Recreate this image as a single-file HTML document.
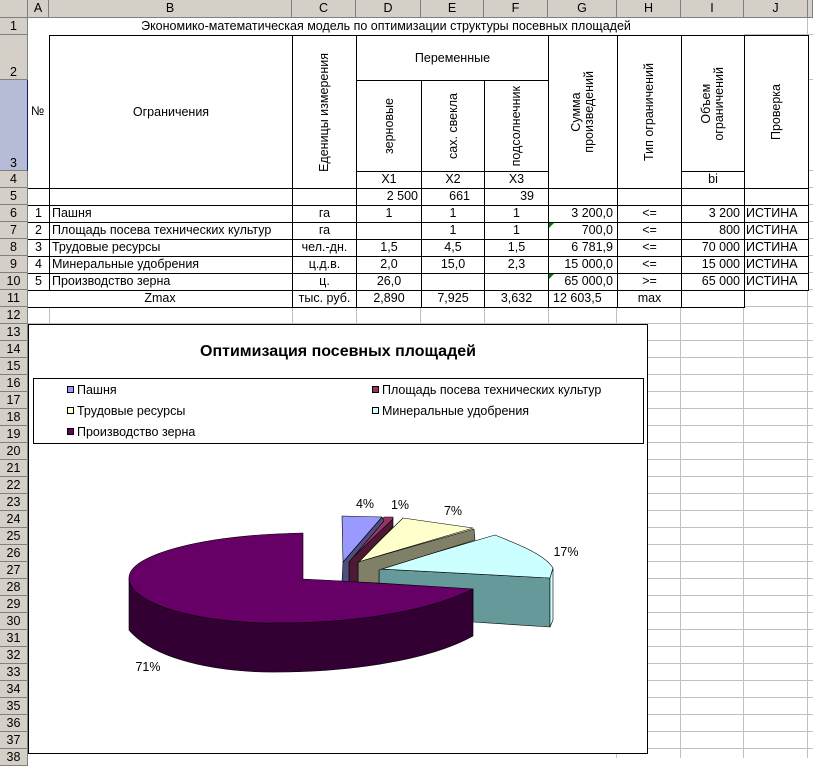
<!DOCTYPE html>
<html><head><meta charset="utf-8">
<style>
*{margin:0;padding:0;box-sizing:border-box}
body{width:813px;height:758px;overflow:hidden;background:#fff;font-family:"Liberation Sans",Arial,sans-serif;font-size:12.5px;color:#000;position:relative}
.a{position:absolute}
.ch{position:absolute;top:0;height:18px;background:#d4d0c8;border-right:1px solid #808080;border-bottom:1px solid #808080;text-align:center;line-height:17px;font-size:12.5px}
.rh{position:absolute;left:0;width:28px;background:#d4d0c8;border-right:1px solid #808080;border-bottom:1px solid #808080;text-align:center;font-size:12.5px}
.c{position:absolute;border:1px solid #000;background:#fff;line-height:15px;white-space:nowrap;overflow:hidden;padding:0 3px}
.v{position:absolute;border:1px solid #000;background:#fff;display:flex;align-items:center;justify-content:center}
.v span{writing-mode:vertical-rl;transform:rotate(180deg);text-align:center;line-height:13px;white-space:nowrap}
.r{text-align:right}.m{text-align:center}
.gl{position:absolute;background:#c0c0c0}
.sq{position:absolute;width:7px;height:7px;border:1px solid #000}
.lt{position:absolute;font-size:12.5px;line-height:14px;white-space:nowrap}
</style></head><body>
<div class="a" style="left:28px;top:18px;width:785px;height:740px;background:repeating-linear-gradient(to bottom,transparent 0 16px,#c0c0c0 16px 17px)"></div>
<div class="a" style="left:28px;top:18px;width:785px;height:289px;background:#fff"></div>
<div class="gl" style="left:49px;top:307px;width:1px;height:17px"></div>
<div class="gl" style="left:292px;top:307px;width:1px;height:17px"></div>
<div class="gl" style="left:356px;top:307px;width:1px;height:17px"></div>
<div class="gl" style="left:420px;top:307px;width:1px;height:17px"></div>
<div class="gl" style="left:484px;top:307px;width:1px;height:17px"></div>
<div class="gl" style="left:548px;top:307px;width:1px;height:17px"></div>
<div class="gl" style="left:616px;top:307px;width:1px;height:451px"></div>
<div class="gl" style="left:680px;top:307px;width:1px;height:451px"></div>
<div class="gl" style="left:743px;top:18px;width:1px;height:740px"></div>
<div class="gl" style="left:807px;top:18px;width:1px;height:740px"></div>
<div class="gl" style="left:28px;top:34px;width:785px;height:1px"></div>
<div class="gl" style="left:808px;top:79px;width:5px;height:1px"></div>
<div class="gl" style="left:808px;top:170px;width:5px;height:1px"></div>
<div class="gl" style="left:808px;top:187px;width:5px;height:1px"></div>
<div class="gl" style="left:808px;top:204px;width:5px;height:1px"></div>
<div class="gl" style="left:808px;top:221px;width:5px;height:1px"></div>
<div class="gl" style="left:808px;top:238px;width:5px;height:1px"></div>
<div class="gl" style="left:808px;top:255px;width:5px;height:1px"></div>
<div class="gl" style="left:808px;top:272px;width:5px;height:1px"></div>
<div class="gl" style="left:808px;top:289px;width:5px;height:1px"></div>
<div class="gl" style="left:744px;top:306px;width:69px;height:1px"></div>
<div class="gl" style="left:28px;top:306px;width:716px;height:1px"></div>

<div class="ch" style="left:0;width:28px"></div>
<div class="ch" style="left:28px;width:21px">A</div>
<div class="ch" style="left:49px;width:243px">B</div>
<div class="ch" style="left:292px;width:64px">C</div>
<div class="ch" style="left:356px;width:65px">D</div>
<div class="ch" style="left:421px;width:63px">E</div>
<div class="ch" style="left:484px;width:64px">F</div>
<div class="ch" style="left:548px;width:69px">G</div>
<div class="ch" style="left:617px;width:64px">H</div>
<div class="ch" style="left:681px;width:63px">I</div>
<div class="ch" style="left:744px;width:64px">J</div>
<div class="ch" style="left:808px;width:5px"></div>

<div class="rh" style="top:18px;height:17px;line-height:16px">1</div>
<div class="rh" style="top:35px;height:45px;line-height:14px;padding-top:30px">2</div>
<div class="rh" style="top:80px;height:91px;background:#b6bcd6;border-right:1px solid #0a246a;line-height:14px;padding-top:76px">3</div>
<div class="rh" style="top:171px;height:17px;line-height:16px">4</div>
<div class="rh" style="top:188px;height:17px;line-height:16px">5</div>
<div class="rh" style="top:205px;height:17px;line-height:16px">6</div>
<div class="rh" style="top:222px;height:17px;line-height:16px">7</div>
<div class="rh" style="top:239px;height:17px;line-height:16px">8</div>
<div class="rh" style="top:256px;height:17px;line-height:16px">9</div>
<div class="rh" style="top:273px;height:17px;line-height:16px">10</div>
<div class="rh" style="top:290px;height:17px;line-height:16px">11</div>
<div class="rh" style="top:307px;height:17px;line-height:16px">12</div>
<div class="rh" style="top:324px;height:17px;line-height:16px">13</div>
<div class="rh" style="top:341px;height:17px;line-height:16px">14</div>
<div class="rh" style="top:358px;height:17px;line-height:16px">15</div>
<div class="rh" style="top:375px;height:17px;line-height:16px">16</div>
<div class="rh" style="top:392px;height:17px;line-height:16px">17</div>
<div class="rh" style="top:409px;height:17px;line-height:16px">18</div>
<div class="rh" style="top:426px;height:17px;line-height:16px">19</div>
<div class="rh" style="top:443px;height:17px;line-height:16px">20</div>
<div class="rh" style="top:460px;height:17px;line-height:16px">21</div>
<div class="rh" style="top:477px;height:17px;line-height:16px">22</div>
<div class="rh" style="top:494px;height:17px;line-height:16px">23</div>
<div class="rh" style="top:511px;height:17px;line-height:16px">24</div>
<div class="rh" style="top:528px;height:17px;line-height:16px">25</div>
<div class="rh" style="top:545px;height:17px;line-height:16px">26</div>
<div class="rh" style="top:562px;height:17px;line-height:16px">27</div>
<div class="rh" style="top:579px;height:17px;line-height:16px">28</div>
<div class="rh" style="top:596px;height:17px;line-height:16px">29</div>
<div class="rh" style="top:613px;height:17px;line-height:16px">30</div>
<div class="rh" style="top:630px;height:17px;line-height:16px">31</div>
<div class="rh" style="top:647px;height:17px;line-height:16px">32</div>
<div class="rh" style="top:664px;height:17px;line-height:16px">33</div>
<div class="rh" style="top:681px;height:17px;line-height:16px">34</div>
<div class="rh" style="top:698px;height:17px;line-height:16px">35</div>
<div class="rh" style="top:715px;height:17px;line-height:16px">36</div>
<div class="rh" style="top:732px;height:17px;line-height:16px">37</div>
<div class="rh" style="top:749px;height:17px;line-height:16px">38</div>

<div class="a" style="left:28px;top:18px;width:716px;height:17px;text-align:center;line-height:17px;background:#fff">Экономико-математическая модель по оптимизации структуры посевных площадей</div>

<div class="v" style="left:28px;top:35px;width:22px;height:154px;border-left:none;border-top:none"></div>
<div class="a" style="left:31px;top:104px">№</div>
<div class="v" style="left:49px;top:35px;width:244px;height:154px"><div>Ограничения</div></div>
<div class="v" style="left:292px;top:35px;width:65px;height:154px"><span>Еденицы измерения</span></div>
<div class="v" style="left:356px;top:35px;width:193px;height:46px"><div>Переменные</div></div>
<div class="v" style="left:356px;top:80px;width:66px;height:92px"><span>зерновые</span></div>
<div class="v" style="left:421px;top:80px;width:64px;height:92px"><span>сах. свекла</span></div>
<div class="v" style="left:484px;top:80px;width:65px;height:92px"><span>подсолнечник</span></div>
<div class="c m" style="left:356px;top:171px;width:66px;height:18px">X1</div>
<div class="c m" style="left:421px;top:171px;width:64px;height:18px">X2</div>
<div class="c m" style="left:484px;top:171px;width:65px;height:18px">X3</div>
<div class="v" style="left:548px;top:35px;width:70px;height:154px"><span>Сумма<br>произведений</span></div>
<div class="v" style="left:617px;top:35px;width:65px;height:154px"><span>Тип ограничений</span></div>
<div class="v" style="left:681px;top:35px;width:64px;height:137px"><span>Объем<br>ограничений</span></div>
<div class="c m" style="left:681px;top:171px;width:64px;height:18px">bi</div>
<div class="v" style="left:744px;top:35px;width:65px;height:154px"><span>Проверка</span></div>

<div class="c" style="left:28px;top:188px;width:22px;height:18px;border-left:none"></div>
<div class="c" style="left:49px;top:188px;width:244px;height:18px"></div>
<div class="c" style="left:292px;top:188px;width:65px;height:18px"></div>
<div class="c r" style="left:356px;top:188px;width:66px;height:18px">2 500</div>
<div class="c r" style="left:421px;top:188px;width:64px;height:18px;padding-right:14px">661</div>
<div class="c r" style="left:484px;top:188px;width:65px;height:18px;padding-right:14px">39</div>
<div class="c" style="left:548px;top:188px;width:70px;height:18px"></div>
<div class="c" style="left:617px;top:188px;width:65px;height:18px"></div>
<div class="c" style="left:681px;top:188px;width:64px;height:18px"></div>
<div class="c" style="left:744px;top:188px;width:65px;height:18px"></div>

<div class="c m" style="left:28px;top:205px;width:22px;height:18px;border-left:none">1</div>
<div class="c" style="left:49px;top:205px;width:244px;height:18px;padding-left:2px">Пашня</div>
<div class="c m" style="left:292px;top:205px;width:65px;height:18px">га</div>
<div class="c m" style="left:356px;top:205px;width:66px;height:18px">1</div>
<div class="c m" style="left:421px;top:205px;width:64px;height:18px">1</div>
<div class="c m" style="left:484px;top:205px;width:65px;height:18px">1</div>
<div class="c r" style="left:548px;top:205px;width:70px;height:18px;padding-right:4px">3 200,0</div>
<div class="c m" style="left:617px;top:205px;width:65px;height:18px">&lt;=</div>
<div class="c r" style="left:681px;top:205px;width:64px;height:18px;padding-right:4px">3 200</div>
<div class="c" style="left:744px;top:205px;width:65px;height:18px;padding-left:1px">ИСТИНА</div>

<div class="c m" style="left:28px;top:222px;width:22px;height:18px;border-left:none">2</div>
<div class="c" style="left:49px;top:222px;width:244px;height:18px;padding-left:2px">Площадь посева технических культур</div>
<div class="c m" style="left:292px;top:222px;width:65px;height:18px">га</div>
<div class="c m" style="left:356px;top:222px;width:66px;height:18px"></div>
<div class="c m" style="left:421px;top:222px;width:64px;height:18px">1</div>
<div class="c m" style="left:484px;top:222px;width:65px;height:18px">1</div>
<div class="c r" style="left:548px;top:222px;width:70px;height:18px;padding-right:4px">700,0</div>
<div class="c m" style="left:617px;top:222px;width:65px;height:18px">&lt;=</div>
<div class="c r" style="left:681px;top:222px;width:64px;height:18px;padding-right:4px">800</div>
<div class="c" style="left:744px;top:222px;width:65px;height:18px;padding-left:1px">ИСТИНА</div>

<div class="c m" style="left:28px;top:239px;width:22px;height:18px;border-left:none">3</div>
<div class="c" style="left:49px;top:239px;width:244px;height:18px;padding-left:2px">Трудовые ресурсы</div>
<div class="c m" style="left:292px;top:239px;width:65px;height:18px">чел.-дн.</div>
<div class="c m" style="left:356px;top:239px;width:66px;height:18px">1,5</div>
<div class="c m" style="left:421px;top:239px;width:64px;height:18px">4,5</div>
<div class="c m" style="left:484px;top:239px;width:65px;height:18px">1,5</div>
<div class="c r" style="left:548px;top:239px;width:70px;height:18px;padding-right:4px">6 781,9</div>
<div class="c m" style="left:617px;top:239px;width:65px;height:18px">&lt;=</div>
<div class="c r" style="left:681px;top:239px;width:64px;height:18px;padding-right:4px">70 000</div>
<div class="c" style="left:744px;top:239px;width:65px;height:18px;padding-left:1px">ИСТИНА</div>

<div class="c m" style="left:28px;top:256px;width:22px;height:18px;border-left:none">4</div>
<div class="c" style="left:49px;top:256px;width:244px;height:18px;padding-left:2px">Минеральные удобрения</div>
<div class="c m" style="left:292px;top:256px;width:65px;height:18px">ц.д.в.</div>
<div class="c m" style="left:356px;top:256px;width:66px;height:18px">2,0</div>
<div class="c m" style="left:421px;top:256px;width:64px;height:18px">15,0</div>
<div class="c m" style="left:484px;top:256px;width:65px;height:18px">2,3</div>
<div class="c r" style="left:548px;top:256px;width:70px;height:18px;padding-right:4px">15 000,0</div>
<div class="c m" style="left:617px;top:256px;width:65px;height:18px">&lt;=</div>
<div class="c r" style="left:681px;top:256px;width:64px;height:18px;padding-right:4px">15 000</div>
<div class="c" style="left:744px;top:256px;width:65px;height:18px;padding-left:1px">ИСТИНА</div>

<div class="c m" style="left:28px;top:273px;width:22px;height:18px;border-left:none">5</div>
<div class="c" style="left:49px;top:273px;width:244px;height:18px;padding-left:2px">Производство зерна</div>
<div class="c m" style="left:292px;top:273px;width:65px;height:18px">ц.</div>
<div class="c m" style="left:356px;top:273px;width:66px;height:18px">26,0</div>
<div class="c m" style="left:421px;top:273px;width:64px;height:18px"></div>
<div class="c m" style="left:484px;top:273px;width:65px;height:18px"></div>
<div class="c r" style="left:548px;top:273px;width:70px;height:18px;padding-right:4px">65 000,0</div>
<div class="c m" style="left:617px;top:273px;width:65px;height:18px">&gt;=</div>
<div class="c r" style="left:681px;top:273px;width:64px;height:18px;padding-right:4px">65 000</div>
<div class="c" style="left:744px;top:273px;width:65px;height:18px;padding-left:1px">ИСТИНА</div>

<div class="c m" style="left:28px;top:290px;width:265px;height:18px;border-left:none">Zmax</div>
<div class="c m" style="left:292px;top:290px;width:65px;height:18px;padding:0">тыс. руб.</div>
<div class="c m" style="left:356px;top:290px;width:66px;height:18px">2,890</div>
<div class="c m" style="left:421px;top:290px;width:64px;height:18px">7,925</div>
<div class="c m" style="left:484px;top:290px;width:65px;height:18px">3,632</div>
<div class="c" style="left:548px;top:290px;width:70px;height:18px;padding-left:4px">12 603,5</div>
<div class="c m" style="left:617px;top:290px;width:65px;height:18px">max</div>
<div class="c" style="left:681px;top:290px;width:64px;height:18px"></div>

<svg class="a" style="left:549px;top:223px" width="5" height="5"><path d="M0 0H5L0 5Z" fill="#008000"/></svg>
<svg class="a" style="left:549px;top:274px" width="5" height="5"><path d="M0 0H5L0 5Z" fill="#008000"/></svg>

<div class="a" style="left:28px;top:324px;width:620px;height:430px;border:1px solid #000;background:#fff"></div>
<div class="a" style="left:28px;top:341px;width:620px;text-align:center;font-weight:bold;font-size:16px;line-height:22px">Оптимизация посевных площадей</div>
<div class="a" style="left:33px;top:378px;width:611px;height:66px;border:1px solid #000"></div>
<div class="sq" style="left:67px;top:386px;background:#9999ff"></div><div class="lt" style="left:77px;top:383px">Пашня</div>
<div class="sq" style="left:372px;top:386px;background:#993366"></div><div class="lt" style="left:382px;top:383px">Площадь посева технических культур</div>
<div class="sq" style="left:67px;top:407px;background:#ffffcc"></div><div class="lt" style="left:77px;top:404px">Трудовые ресурсы</div>
<div class="sq" style="left:372px;top:407px;background:#ccffff"></div><div class="lt" style="left:382px;top:404px">Минеральные удобрения</div>
<div class="sq" style="left:67px;top:428px;background:#660066"></div><div class="lt" style="left:77px;top:425px">Производство зерна</div>

<svg class="a" style="left:0;top:0" width="813" height="758">
<g stroke="#000" stroke-width="0.6" stroke-linejoin="round">
<polygon points="379,569 379,583 473,589 473,622 550,627 550,578" fill="#669999"/>
<path d="M550,578 L553,568 L553,620 L550,627 Z" fill="#ccffff"/>
<path d="M379,569 L495,535 C520,545 545,555 553,568 L550,578 Z" fill="#ccffff"/>
<polygon points="358,562 474,529 475,540 379,570 379,583 358,582" fill="#808066"/>
<polygon points="358,562 403,518 473,528" fill="#ffffcc"/>
<polygon points="349,561 393,518 393,527 358,563 358,582 349,582" fill="#4d1a33"/>
<polygon points="349,561 384,517 393,517 393,519" fill="#993366"/>
<polygon points="343,562 382,517 384,521 349,562 349,582 342,582" fill="#4d4d80"/>
<polygon points="342,516 382,517 343,562" fill="#9999ff"/>
<path d="M129,578 L129,630 C150,655 200,670 263,672 C350,673 430,660 473,636 L473,589 C420,615 340,624 263,623 C180,620 129,600 129,578 Z" fill="#330033"/>
<path d="M303,533 L303,579 L342,581 L473,589 C420,615 340,624 263,623 C180,620 129,600 129,578 C129,555 200,535 303,533 Z" fill="#660066"/>
</g>
<g font-family="Liberation Sans, Arial, sans-serif" font-size="12.5" text-anchor="middle">
<text x="365" y="508">4%</text>
<text x="400" y="509">1%</text>
<text x="453" y="515">7%</text>
<text x="566" y="556">17%</text>
<text x="148" y="671">71%</text>
</g>
</svg>
</body></html>
